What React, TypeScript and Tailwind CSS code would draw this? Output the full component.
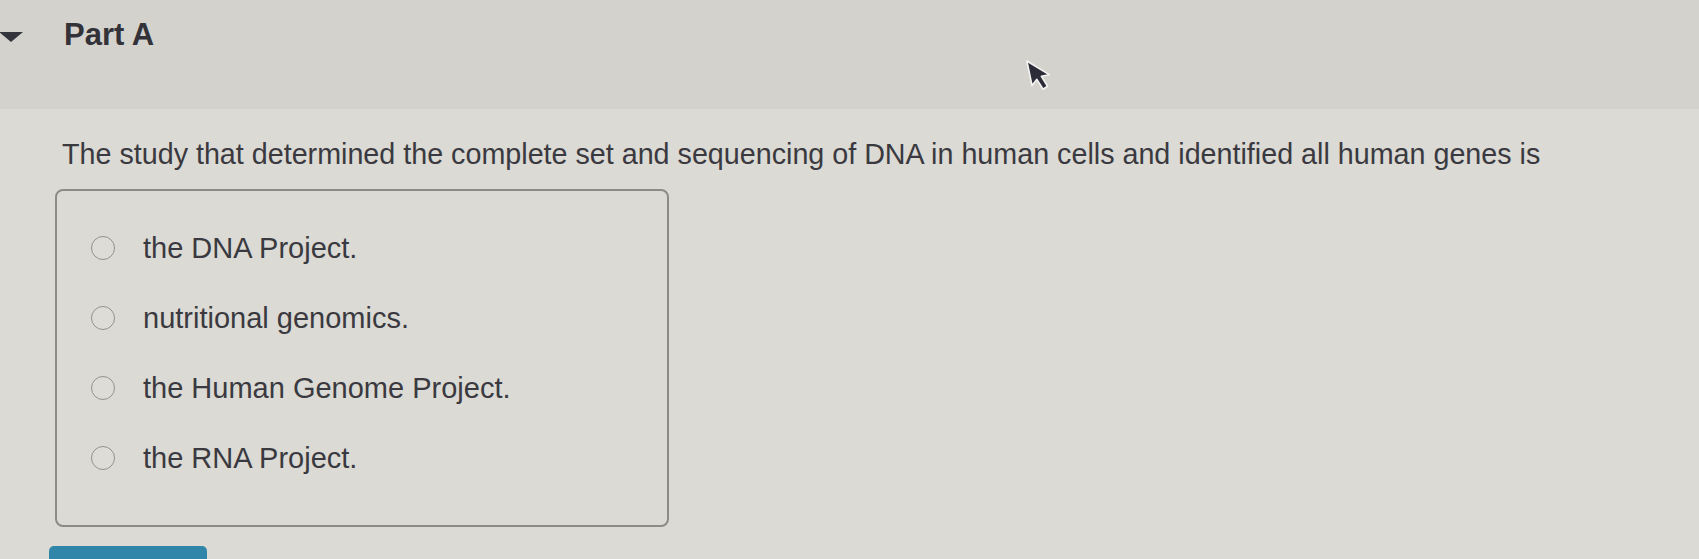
const options = [
  'the DNA Project.',
  'nutritional genomics.',
  'the Human Genome Project.',
  'the RNA Project.',
]

function Cursor() {
  return (
    <svg
      className="absolute left-[1026px] top-[57px]"
      width="28"
      height="38"
      viewBox="0 0 28 38"
    >
      <path
        d="M4 2 L4 27 L10 22 L14 33 L19 31 L15 20 L23 20 Z"
        fill="#2c2c38"
        stroke="#f4f4f2"
        strokeWidth="1.6"
        strokeLinejoin="round"
        transform="rotate(-12 12 18)"
      />
    </svg>
  )
}

export default function App() {
  return (
    <div className="relative w-[1699px] h-[559px] overflow-hidden bg-[#dbdad4] text-[#3a3940] font-['Liberation_Sans',Arial,sans-serif]">
      <div className="flex items-start h-[109px] pt-[17px] bg-[#d4d2cd]">
        <div className="mt-[15px] w-0 h-0 border-l-[12px] border-r-[12px] border-t-[10px] border-l-transparent border-r-transparent border-t-[#34343c] -ml-[1px]" />
        <h2 className="ml-[41px] text-[31px] leading-[36px] font-bold text-[#323238]">Part A</h2>
      </div>

      <p className="mt-[28px] pl-[62px] text-[28.7px] leading-[34px]">
        The study that determined the complete set and sequencing of DNA in human cells and identified all human genes is
      </p>

      <div className="mt-[18px] ml-[55px] w-[614px] h-[338px] border-2 border-[#8c8b87] rounded-[8px] pt-[40px] pl-[34px] flex flex-col gap-[36px]">
        {options.map((opt) => (
          <label key={opt} className="flex items-center h-[34px]">
            <span className="w-[24px] h-[24px] rounded-full border-[1.5px] border-[#92918d] bg-[#dedcd7] shrink-0" />
            <span className="ml-[28px] text-[29px] leading-[34px]">{opt}</span>
          </label>
        ))}
      </div>

      <div className="mt-[19px] ml-[49px] w-[158px] h-[40px] rounded-[5px] bg-[#2f86a8]" />

      <Cursor />
    </div>
  )
}
